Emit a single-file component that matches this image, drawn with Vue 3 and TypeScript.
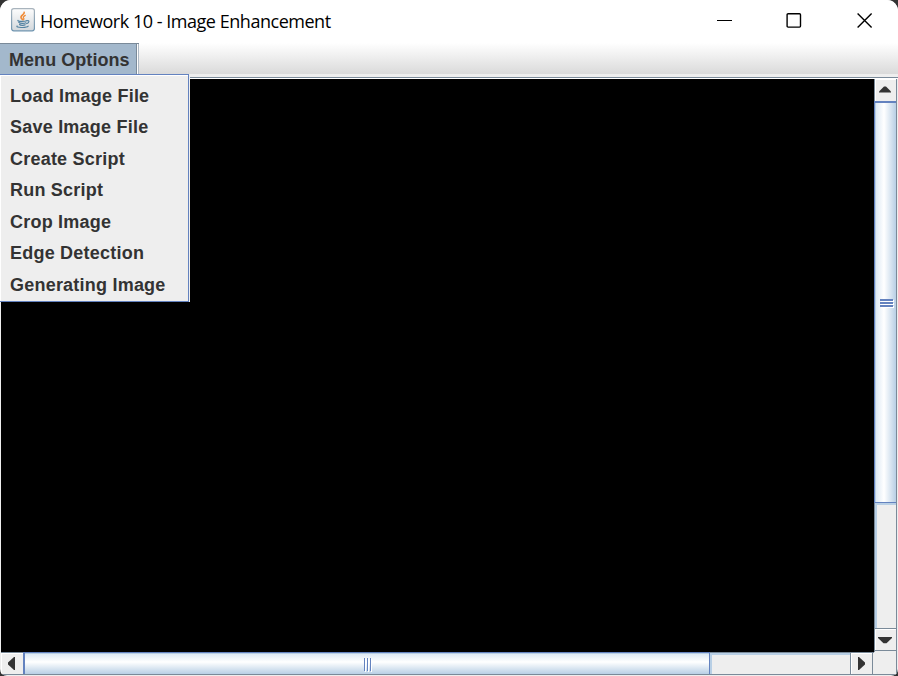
<script setup lang="ts">
interface MenuItem {
  id: string
  label: string
}

const title = 'Homework 10 - Image Enhancement'
const items: MenuItem[] = [
  { id: 'load', label: 'Load Image File' },
  { id: 'save', label: 'Save Image File' },
  { id: 'create', label: 'Create Script' },
  { id: 'run', label: 'Run Script' },
  { id: 'crop', label: 'Crop Image' },
  { id: 'edge', label: 'Edge Detection' },
  { id: 'generate', label: 'Generating Image' },
]
</script>

<template>
  <div class="desktop">
    <div class="window">
      <header class="titlebar">
        <svg class="app-icon" width="24" height="24" viewBox="0 0 24 24">
          <defs>
            <linearGradient id="tile" x1="0" y1="0" x2="0" y2="1">
              <stop offset="0" stop-color="#fdfdfd" />
              <stop offset="1" stop-color="#d3d8dc" />
            </linearGradient>
            <linearGradient id="edge" x1="0" y1="0" x2="0" y2="1">
              <stop offset="0" stop-color="#a9b4bd" />
              <stop offset="1" stop-color="#6e94af" />
            </linearGradient>
          </defs>
          <rect x="0.6" y="0.6" width="22.8" height="22.2" rx="2.2" fill="url(#tile)" stroke="url(#edge)" stroke-width="1.2" />
          <g fill="none" stroke="#f08a35" stroke-linecap="round">
            <path d="M13.2 4.2 C13.8 6.6 8.8 7.4 10.2 10 L11.4 11.6" stroke-width="1.6" />
            <path d="M14.3 7.4 C12 8.6 12 9.4 12.9 10.6 L12.6 11.8" stroke-width="1.2" />
          </g>
          <g fill="none" stroke="#5382a1" stroke-linecap="round">
            <path d="M7 12.5 C6 13.6 14 13.6 15.6 12.7" stroke-width="1.2" />
            <path d="M7.8 14.4 C9 15.8 13.6 15.6 14.8 14.8" stroke-width="1.2" />
            <path d="M8.6 16.5 C9.6 17.6 13 17.5 14.2 16.8" stroke-width="1.2" />
            <path d="M16 12.8 C18.8 12 18.4 14.8 15.6 15.6" stroke-width="1.1" />
            <path d="M6.2 18 C3.6 19.6 15.6 20.2 17.2 18.2" stroke-width="1.1" />
          </g>
        </svg>
        <h1 class="title">{{ title }}</h1>
        <div class="controls">
          <svg width="16" height="16" viewBox="0 0 16 16"><path d="M0 7.5H15" stroke="#000" /></svg>
          <svg width="16" height="16" viewBox="0 0 16 16"><rect x="0.2" y="0.7" width="13.4" height="13.4" rx="1" transform="translate(-0.1 0)" fill="none" stroke="#000" stroke-width="1.4" overflow="visible" /></svg>
          <svg width="16" height="16" viewBox="0 0 16 16"><path d="M0.6 0.6L14.6 14.6M14.6 0.6L0.6 14.6" stroke="#000" stroke-width="1.4" fill="none" /></svg>
        </div>
      </header>

      <nav class="menubar">
        <button class="menu-button">Menu Options</button>
        <ul class="popup">
          <li v-for="item in items" :key="item.id">{{ item.label }}</li>
        </ul>
      </nav>

      <main class="scrollpane">
        <div class="canvas"></div>
        <div class="vbar">
          <div class="btn up"><svg width="12" height="7" viewBox="0 0 12 7"><path d="M0 6.5V5.5L5 0.5H7L12 5.5V6.5Z" fill="#333" /></svg></div>
          <div class="vthumb"><i></i><i></i><i></i></div>
          <div class="vtrack"></div>
          <div class="btn down"><svg width="14" height="7" viewBox="0 0 14 7"><path d="M0 0H14V1L8.5 6.2H5.5L0 1Z" fill="#333" /></svg></div>
        </div>
        <div class="hbar">
          <div class="btn left"><svg width="7" height="13" viewBox="0 0 7 13"><path d="M7 0H6L0 5.5V7.5L6 13H7Z" fill="#333" /></svg></div>
          <div class="hthumb"><i></i><i></i><i></i></div>
          <div class="htrack"></div>
          <div class="btn right"><svg width="7" height="13" viewBox="0 0 7 13"><path d="M0 0H1L7 5.5V7.5L1 13H0Z" fill="#333" /></svg></div>
        </div>
        <div class="corner"></div>
      </main>
    </div>
  </div>
</template>

<style>
body {
  margin: 0;
  overflow: hidden;
}
</style>

<style scoped>
* {
  box-sizing: border-box;
}
.desktop {
  width: 898px;
  height: 676px;
  background: #333;
}
.window {
  width: 898px;
  height: 676px;
  display: flex;
  flex-direction: column;
  background: #eee;
  border-radius: 11px 11px 7px 7px;
  overflow: hidden;
}
.titlebar {
  height: 43px;
  display: flex;
  align-items: flex-start;
  padding-left: 11px;
  background: #fff;
}
.app-icon {
  margin-top: 8px;
}
.title {
  margin: 8px 0 0 5px;
  font: 400 18px/26px "Open Sans", "Noto Sans", sans-serif;
  letter-spacing: -0.47px;
  color: #000;
  white-space: nowrap;
}
.controls {
  display: flex;
  gap: 54px;
  margin: 13px 25px 0 auto;
}
.controls svg {
  overflow: visible;
}
.menubar {
  position: relative;
  height: 34px;
  background: linear-gradient(#fff 0, #dadada 31px, #eee 31px);
}
.menu-button {
  display: block;
  width: 139px;
  height: 31px;
  padding: 2px 0 0 9px;
  border: 0;
  background: linear-gradient(90deg, #a3b8cc 136px, #7a8a99 136px 137px, #fff 137px 138px, #aeb9c4 138px);
  box-shadow: inset 0 1px #7a8a99;
  font: bold 18px/30px "Liberation Sans", Arial, sans-serif;
  letter-spacing: 0.05px;
  text-align: left;
  color: #333;
}
.popup {
  position: absolute;
  z-index: 2;
  left: 0;
  top: 31px;
  width: 189px;
  height: 228px;
  margin: 0;
  padding: 5.6px 0 0 10px;
  list-style: none;
  background: #eee;
  border: solid #6382bf;
  border-width: 1px 1px 1px 0;
  box-shadow: inset 1px 1px #fff, 1px 0 #eee;
  font: bold 18px/31.5px "Liberation Sans", Arial, sans-serif;
  letter-spacing: 0.22px;
  color: #333;
}
.popup li {
  height: 31.5px;
}
.scrollpane {
  flex: 1;
  display: grid;
  grid-template-columns: 873px 23px;
  grid-template-rows: 573px 22px;
  padding-left: 1px;
  border-top: 1px solid #7a8a99;
  background: linear-gradient(#fff 1px, transparent 1px);
  padding-top: 1px;
}
.canvas {
  background: #000;
}
.btn {
  display: flex;
  align-items: center;
  justify-content: center;
  background: #eee;
}
.vbar {
  display: flex;
  flex-direction: column;
  border-left: 1px solid #7a8a99;
  border-right: 1px solid #7a8a99;
}
.up {
  height: 22px;
  padding-bottom: 1px;
  padding-right: 1px;
  box-shadow: inset 1px 1px #fff;
}
.vthumb {
  height: 402px;
  display: flex;
  flex-direction: column;
  align-items: flex-end;
  justify-content: center;
  gap: 1px;
  padding: 1px 3px 0 0;
  border-top: 2px solid #6382bf;
  border-bottom: 1px solid #6382bf;
  background: linear-gradient(90deg, #b8cfe5 0 1px, #dde9f4 1px, #fff 9px, #b8cfe5 21px);
  box-shadow: -1px 0 #6382bf;
}
.vthumb i {
  width: 13px;
  height: 2px;
  background: #6382bf;
  box-shadow: 1px 1px #fff;
}
.vtrack {
  flex: 1;
  background: #eee;
  box-shadow: inset 2px 2px #b8cfe5;
}
.down {
  height: 23px;
  margin-bottom: 1px;
  padding: 1px 1px 0 0;
  border-top: 1px solid #7a8a99;
  border-bottom: 1px solid #7a8a99;
  box-shadow: inset 1px 1px #fff;
}
.hbar {
  display: flex;
  height: 23px;
  border-top: 1px solid #7a8a99;
  border-bottom: 1px solid #7a8a99;
}
.left {
  width: 22px;
  padding-right: 2px;
  box-shadow: inset 1px 1px #fff;
}
.hthumb {
  width: 687px;
  display: flex;
  align-items: flex-end;
  justify-content: center;
  gap: 2px;
  padding-bottom: 3px;
  border-left: 2px solid #6382bf;
  border-right: 1px solid #6382bf;
  background: linear-gradient(#b8cfe5 0 1px, #dde9f4 1px, #fff 9px, #b8cfe5 21px);
  box-shadow: 0 -1px #6382bf;
}
.hthumb i {
  width: 1px;
  height: 13px;
  background: #6382bf;
  box-shadow: 1px 1px #fff;
}
.htrack {
  flex: 1;
  background: #eee;
  box-shadow: inset 2px 2px #b8cfe5;
}
.right {
  width: 23px;
  margin-right: 1px;
  border-left: 1px solid #7a8a99;
  border-right: 1px solid #7a8a99;
  box-shadow: inset 1px 1px #fff;
}
.corner {
  height: 23px;
  background: #eee;
  border-right: 1px solid #7a8a99;
  border-bottom: 1px solid #7a8a99;
}
</style>
